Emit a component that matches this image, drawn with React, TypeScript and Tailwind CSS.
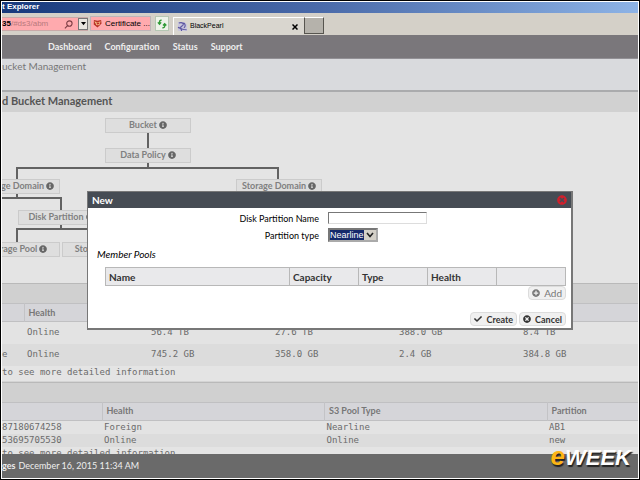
import { useState } from "react";
import { FaCheck, FaInfoCircle, FaPlusCircle, FaTimesCircle } from "react-icons/fa";

interface TreeNode {
  label: string;
  className: string;
}

const navItems = ["Dashboard", "Configuration", "Status", "Support"];

const nodes: TreeNode[] = [
  { label: "Bucket", className: "left-[103px] top-[6px]" },
  { label: "Data Policy", className: "left-[103px] top-[36px]" },
  { label: "Storage Domain", className: "left-[-28px] top-[67px]" },
  { label: "Storage Domain", className: "left-[234px] top-[67px]" },
  { label: "Disk Partition", className: "left-[16px] top-[98px]" },
  { label: "Storage Pool", className: "left-[-28px] top-[130px]" },
  { label: "Storage Pool", className: "left-[60px] top-[130px]" },
];

const partitions = [
  { name: "", health: "Online", cells: ["56.4 TB", "27.6 TB", "388.0 GB", "8.4 TB"] },
  { name: "e", health: "Online", cells: ["745.2 GB", "358.0 GB", "2.4 GB", "384.8 GB"] },
];

const pools = [
  { id: "87180674258", health: "Foreign", type: "Nearline", partition: "AB1" },
  { id: "53695705530", health: "Online", type: "Online", partition: "new" },
];

const buttonClass =
  "flex h-[14px] items-center gap-1 rounded-sm border border-[#dcdcdc] bg-[#f0f0f0] px-[3px] leading-none";

function BrowserBar() {
  return (
    <div className="font-['Liberation_Sans',sans-serif]">
      <div className="h-[11px] overflow-hidden bg-linear-to-r from-[#17397c] via-[#4a6aa9] to-[#8db3e6] text-[8px] leading-[9px] font-bold text-white">
        t Explorer
      </div>
      <div className="flex h-[22px] items-end bg-[#d4d0c8] text-[8px] text-black">
        <div className="mb-1 flex h-[14px] w-[86px] items-center border-y border-[#c9a9a8] bg-[#ffaaae]">
          <span className="font-bold">35</span>
          <span className="grow text-[#b9797d]">/#ds3/abm</span>
          <svg viewBox="0 0 10 10" className="mr-[5px] size-[9px]" fill="none" stroke="#7c3d44" strokeWidth="1.2">
            <circle cx="6" cy="4" r="3" />
            <path d="M4 6.2 1 9.4" />
          </svg>
          <span className="flex h-3 w-[10px] items-center justify-center border border-[#777] bg-[#e8e5df]">
            <svg viewBox="0 0 6 4" className="w-[5px]">
              <path d="M0 0h6L3 4z" />
            </svg>
          </span>
        </div>
        <div className="mb-1 ml-[2px] flex h-[15px] w-[61px] items-center gap-[3px] border border-[#bdb4b8] bg-[#ffaaae] pl-[2px]">
          <svg viewBox="0 0 10 10" className="size-[9px] shrink-0">
            <path d="M1 1 5 2 9 1 9.500 5 5 9.500.800 6z" fill="#b83228" />
            <path d="M1.500 2.500 5 4 8.500 2.500 7 7 4 7z" fill="#f3cf8d" />
            <path d="m4 4 3 3m0-3-3 3" stroke="#c02020" strokeWidth="1.200" />
          </svg>
          <span className="whitespace-nowrap">Certificate ...</span>
        </div>
        <button aria-label="Refresh" className="mb-1 ml-1 flex h-[15px] w-[14px] items-center justify-center border border-[#b5c7b3] bg-[#eef3ea]">
          <svg viewBox="0 0 12 12" className="size-[10px]" fill="none" stroke="#2f9a36" strokeWidth="1.600">
            <path d="M5.500 1.500C3.500 1.300 3 2.300 3 4v2M1 4l2 2.200L5 4M6.500 10.500c2 .2 2.800-.8 2.800-2.500V6M7.200 7.800l2-2.200 2 2.200" />
          </svg>
        </button>
        <div className="ml-1 flex h-[18px] w-[131px] items-center border-t border-l border-white bg-[#d9d6cf] pl-[3px] text-[7px]">
          <svg viewBox="0 0 12 12" className="mr-[2px] size-[11px]">
            <path d="M1 1h7l3 3v7H1z" fill="#c9c7dd" />
            <path d="M2 2.200c5-1.500 6 2 3.500 3.300S3 9.200 10.500 9.500M1 7c3 .5 4 2 4 4M7 2c2.500 1.500 2.500 4 .5 5.500" fill="none" stroke="#5b55a0" strokeWidth="1.200" />
          </svg>
          <span className="grow">BlackPearl</span>
          <button aria-label="Close tab" className="mr-1 flex size-2 items-center">
            <svg viewBox="0 0 6 6" className="size-[6px]" stroke="#000" strokeWidth="1.500">
              <path d="m.5.5 5 5m0-5-5 5" />
            </svg>
          </button>
        </div>
        <button aria-label="New tab" className="mb-px h-[17px] w-[20px] border border-[#57554f] border-t-white bg-[#b5b2ab]" />
      </div>
    </div>
  );
}

function StorageTree() {
  return (
    <div className="relative h-[171px] shrink-0 bg-[#e4e4e4]">
      <svg className="absolute inset-0 size-full" fill="none" stroke="#626262" strokeWidth="2">
        <path d="M146 20v17M146 50v6M15 68V56h261v12M15 80v6M0 86h59v13M59 111v6M15 131v-14h130" />
      </svg>
      {nodes.map((node, i) => (
        <div
          key={i}
          className={`absolute flex h-[15px] w-[86px] items-center justify-center gap-[2px] border border-[#cbcbcb] bg-[#dedede] pb-[2px] text-[9px] leading-none font-bold whitespace-nowrap text-[#808080] ${node.className}`}
        >
          {node.label}
          <FaInfoCircle className="size-2 text-[#666]" />
        </div>
      ))}
    </div>
  );
}

function PartitionTable() {
  return (
    <table className="w-full table-fixed border-collapse text-left">
      <thead>
        <tr className="h-[18px] border-y border-[#c0c0c2] bg-[#d5d5d9] text-[9px] text-[#777]">
          <th className="w-[22px]" />
          <th className="w-[124px] border-l border-[#c3c3c6] pl-1">Health</th>
          <th />
          <th />
          <th />
          <th className="w-[118px]" />
        </tr>
      </thead>
      <tbody className="font-['DejaVu_Sans_Mono',monospace] text-[9px] text-[#6b6b6b]">
        {partitions.map((row, i) => (
          <tr key={i} className="h-[22px] odd:bg-[#e3e3e3] even:bg-[#dcdcdc]">
            <td>{row.name}</td>
            <td className="pl-[3px]">{row.health}</td>
            {row.cells.map((cell, j) => (
              <td key={j} className="pl-[3px]">{cell}</td>
            ))}
          </tr>
        ))}
      </tbody>
    </table>
  );
}

function PoolTable() {
  return (
    <table className="w-full table-fixed border-collapse text-left">
      <thead>
        <tr className="h-[18px] border-y border-[#c0c0c2] bg-[#d5d5d9] text-[9px] text-[#777]">
          <th className="w-[100px]" />
          <th className="border-l border-[#c3c3c6] pl-1">Health</th>
          <th className="border-l border-[#c3c3c6] pl-1">S3 Pool Type</th>
          <th className="w-[91px] border-l border-[#c3c3c6] pl-1">Partition</th>
        </tr>
      </thead>
      <tbody className="font-['DejaVu_Sans_Mono',monospace] text-[9px] leading-[13px] text-[#6b6b6b]">
        {pools.map((pool) => (
          <tr key={pool.id} className="odd:bg-[#e3e3e3] even:bg-[#dcdcdc]">
            <td>{pool.id}</td>
            <td className="pl-[2px]">{pool.health}</td>
            <td className="pl-[2px]">{pool.type}</td>
            <td className="pl-[2px]">{pool.partition}</td>
          </tr>
        ))}
      </tbody>
    </table>
  );
}

function NewPartitionDialog() {
  const [name, setName] = useState("");
  const [type, setType] = useState("Nearline");

  return (
    <div
      role="dialog"
      aria-labelledby="dialog-title"
      className="absolute top-[189px] right-[65px] left-[85px] border border-r-2 border-b-2 border-[#777] bg-white text-[10px] text-black"
    >
      <div className="flex h-4 items-center justify-between bg-[#464c54] px-1">
        <h2 id="dialog-title" className="text-[10px] leading-none font-bold text-white">New</h2>
        <button aria-label="Close">
          <FaTimesCircle className="size-[10px] text-[#d0202c]" />
        </button>
      </div>
      <form className="pr-[5px] pl-[17px]" onSubmit={(e) => e.preventDefault()}>
        <div className="mt-1 grid grid-cols-[214px_1fr] items-center gap-x-[9px] gap-y-1 text-[9px] leading-none">
          <label htmlFor="name" className="text-right">Disk Partition Name</label>
          <input
            id="name"
            value={name}
            onChange={(e) => setName(e.target.value)}
            className="h-3 w-[99px] border border-t-[#777] border-r-[#ddd] border-b-[#ddd] border-l-[#777] bg-white px-px"
          />
          <label htmlFor="type" className="text-right">Partition type</label>
          <div className="flex h-[14px] w-[50px] border-2 border-t-[#777] border-r-[#aaa] border-b-[#aaa] border-l-[#777] bg-white">
            <select
              id="type"
              value={type}
              onChange={(e) => setType(e.target.value)}
              className="grow appearance-none bg-[#14296b] font-['Liberation_Sans',sans-serif] text-[9px] leading-[10px] text-white"
            >
              <option>Nearline</option>
              <option>Online</option>
            </select>
            <span className="pointer-events-none flex w-3 items-center justify-center bg-[#d4d0c8]">
              <svg viewBox="0 0 8 6" className="w-2" fill="none" stroke="#222" strokeWidth="1.600">
                <path d="m1 1 3 3.500L7 1" />
              </svg>
            </span>
          </div>
        </div>
        <h3 className="-ml-2 mt-[7px] leading-[10px] italic">Member Pools</h3>
        <table className="mt-2 w-full table-fixed border-collapse text-left">
          <thead>
            <tr className="h-[18px] bg-[#e9e9eb] leading-none text-[#333]">
              <th className="w-[40%] border border-[#b8b8b8] pl-[3px]">Name</th>
              <th className="w-[15%] border border-[#b8b8b8] pl-[3px]">Capacity</th>
              <th className="w-[15%] border border-[#b8b8b8] pl-[3px]">Type</th>
              <th className="w-[15%] border border-[#b8b8b8] pl-[3px]">Health</th>
              <th className="border border-[#b8b8b8]" />
            </tr>
          </thead>
        </table>
        <div className="flex justify-end">
          <button className={`${buttonClass} text-[#777]`}>
            <FaPlusCircle className="size-2" />
            Add
          </button>
        </div>
        <div className="mt-3 mb-[2px] flex justify-end gap-[2px] text-[9px] font-bold text-[#333]">
          <button className={buttonClass}>
            <FaCheck className="size-2" />
            Create
          </button>
          <button className={buttonClass}>
            <FaTimesCircle className="size-2" />
            Cancel
          </button>
        </div>
      </form>
    </div>
  );
}

export default function App() {
  return (
    <div className="h-screen border border-black bg-white p-px">
      <div className="relative flex h-full flex-col overflow-hidden bg-[#e4e4e4] font-['Lato',sans-serif]">
        <BrowserBar />

        <nav className="flex h-6 shrink-0 items-center gap-[13px] border-b border-[#929095] bg-[#7a777b] pl-[46px] text-[9px] font-bold text-[#eee]">
          {navItems.map((item) => (
            <a key={item} href="#">{item}</a>
          ))}
        </nav>

        <main className="min-h-0 flex-1 overflow-hidden">
          <div className="h-[33px] border-b-2 border-[#aaabad] bg-[#d9dadd] text-[10px] leading-[14px] text-[#777]">
            ucket Management
          </div>
          <h1 className="h-5 bg-[#d1d1d1] text-[11px] leading-[18px] font-bold text-[#555]">
            d Bucket Management
          </h1>
          <StorageTree />

          {/* Partition capacity */}
          <div className="h-5 border-t border-[#b9b9b9] bg-[#d0d0d0]" />
          <PartitionTable />
          <p className="h-4 border-b border-[#d4d4d4] font-['DejaVu_Sans_Mono',monospace] text-[9px] leading-[13px] text-[#6b6b6b]">
            to see more detailed information
          </p>

          {/* Pools */}
          <div className="h-5 border-t border-[#b9b9b9] bg-[#d0d0d0]" />
          <PoolTable />
          <p className="font-['DejaVu_Sans_Mono',monospace] text-[9px] leading-[13px] text-[#6b6b6b]">
            to see more detailed information
          </p>
        </main>

        <footer className="flex h-6 shrink-0 items-center gap-[3px] bg-[#6a6a6a] text-[9px] text-[#eee]">
          <strong>ges</strong>
          <span>December 16, 2015 11:34 AM</span>
        </footer>

        <NewPartitionDialog />

        <div className="absolute right-[7px] bottom-[7px] font-['Liberation_Sans_Narrow','Liberation_Sans',sans-serif] text-[22px] leading-[26px] font-bold text-white italic text-shadow-[1px_2px_1px_#222]">
          <span className="text-[26px] text-[#fdb515]">e</span>WEEK
        </div>
      </div>
    </div>
  );
}
